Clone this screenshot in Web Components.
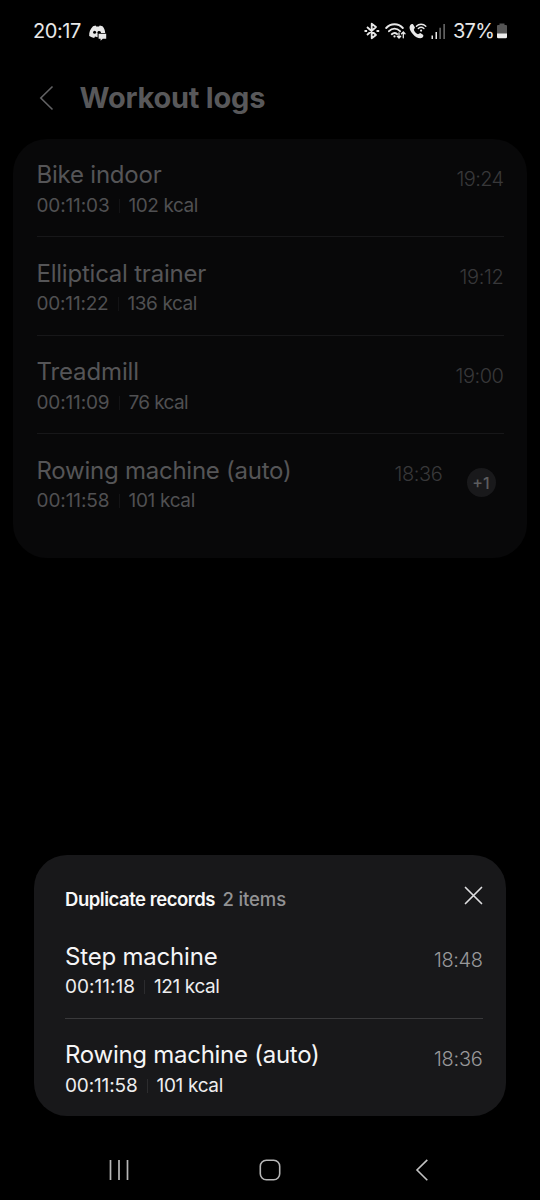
<!DOCTYPE html>
<html lang="en">
<head>
<meta charset="utf-8">
<title>Workout logs</title>
<style>
html,body{margin:0;background:#000}
body{width:540px;height:1200px;overflow:hidden;font-family:Inter,"Liberation Sans",sans-serif}
</style>
</head>
<body>
<workout-screen></workout-screen>
<script>
const define = (name, html, setup) => customElements.define(name, class extends HTMLElement {
  connectedCallback() {
    if (this.shadowRoot) return;
    const t = document.createElement('template');
    t.innerHTML = typeof html === 'function' ? html(k => this.getAttribute(k) ?? '') : html;
    this.attachShadow({ mode: 'open' }).append(t.content.cloneNode(true));
    if (setup) setup(this);
  }
});

// Text whose tracking is tuned so that the line takes the given advance width.
define('fit-text', `<style>:host{display:inline-block;white-space:nowrap}span{display:inline-block}</style><span><slot></slot></span>`, el => {
  const want = parseFloat(el.getAttribute('w'));
  if (!want) return;
  const span = el.shadowRoot.querySelector('span');
  const n = el.textContent.length;
  const have = span.getBoundingClientRect().width;
  span.style.letterSpacing = ((want - have) / n).toFixed(3) + 'px';
});

define('status-bar', `<style>
:host{display:flex;align-items:center;height:62px;box-sizing:border-box;padding:0 32px 0 33px;color:#e8e8e8;font-size:20px;line-height:30px}
.sp{flex:1}svg{display:block;flex:none}
</style>
<fit-text w="48">20:17</fit-text>
<svg style="margin:3px 0 0 8px" width="18" height="16" viewBox="0 0 18 16"><path fill="#e8e8e8" d="M4 1.2 6.6.5 7.3 1.6H10L10.8.5 13.5 1.3C15.3 3.3 16.1 5.8 16.2 8H8.600V12.2L6 11.5 5.2 13 2.8 12.2.2 10.900C0 7.5 1.2 3.8 4 1.2Z"/><circle cx="5.600" cy="7.2" r="1.5" fill="#000"/><path d="M8.300 8C8.300 6.600 9.200 6 10.200 6S12 6.800 12 8" fill="#000"/><path fill="#e8e8e8" d="M9.600 8.800h7.600v5h-3.400l-2.200 2v-2h-2z"/></svg>
<span class="sp"></span>
<svg width="16" height="18" viewBox="0 0 16 18" fill="none" stroke="#e8e8e8" stroke-width="1.800" stroke-linejoin="round"><path d="m3 5 9 8-4.300 3.300V1.700L12 5 3 13"/><path d="M.5 9h2.600M12.500 9h2.700" stroke-width="2.200"/></svg>
<svg style="margin-left:5px" width="22" height="18" viewBox="0 0 22 18" fill="none" stroke="#e8e8e8" stroke-width="1.900" stroke-linecap="round"><path d="M1.200 6C5.700 1 13.300 1 17.800 6M4 9.200C7.300 5.800 11.700 5.800 15 9.200M6.800 12.200C8.500 10.600 10.400 10.600 12 12"/><circle cx="9.500" cy="14.400" r="1.100" fill="#e8e8e8" stroke="none"/><path stroke-width="1.300" d="M14 11v5m-1.700-1.700L14 16l1.700-1.700M18.300 15.800V10m-1.800 1.800 1.800-1.800 1.700 1.800"/></svg>
<svg style="margin-left:2px" width="18" height="18" viewBox="0 0 18 18" fill="none" stroke="#e8e8e8"><path fill="#e8e8e8" stroke="none" d="M1.200 3.200C2 2 3.500 1.600 4.200 2.500L6 5.400 4.800 7.800C5.500 9.800 7 11.300 9 12.300L11.300 11 14 12.800C14.800 13.700 14.200 15 13.200 15.800 10.800 17.200 6.500 15.300 4 12.200 1 9-.4 5.800 1.200 3.200Z"/><path stroke-width="1.400" stroke-linecap="round" d="M7.400 4.200C10 1.600 14.200 1.600 16.800 4.200M9.300 6.500C11 5 13.200 5 14.900 6.500"/><circle cx="12.100" cy="8.600" r="1.100" fill="#e8e8e8" stroke="none"/></svg>
<svg style="margin-left:4px" width="15" height="16" viewBox="0 0 15 16"><path fill="#e8e8e8" d="M.5 12.500h1.500V16H.5zM4.500 9H6v7H4.500z"/><path fill="#606060" d="M8.300 4.800h1.700V16H8.300zM12.300 1H14v15h-1.700z"/></svg>
<fit-text w="41" style="margin-left:7px">37%</fit-text>
<svg style="margin-left:2px" width="12" height="16" viewBox="0 0 12 16"><path fill="#555" d="M3.500.5h5V2H10a1 1 0 0 1 1 1v8H1V3a1 1 0 0 1 1-1h1.500z"/><path fill="#eee" d="M1 10.500h10V14a1.300 1.300 0 0 1-1.300 1.300H2.300A1.300 1.300 0 0 1 1 14z"/></svg>`);

define('page-header', `<style>
:host{display:flex;align-items:center;height:77px;box-sizing:border-box;padding:0 0 6px 39px;color:#58585a}
h1{margin:0 0 0 24.500px;font-size:29px;line-height:36px;font-weight:700;letter-spacing:-.230px}svg{display:block}
</style>
<svg width="16" height="26" viewBox="0 0 16 26" fill="none" stroke="#626264" stroke-width="1.600"><path d="M13.500 1.500 1.800 13l11.700 11.500"/></svg>
<h1><slot></slot></h1>`);

define('workout-row', a => `<style>
:host{display:flex;align-items:flex-start;height:98.500px;box-sizing:border-box;padding-top:21.500px;border-bottom:1px solid var(--line);color:var(--fg)}
:host([last]){border-bottom:0}
.main{flex:1}
.t{font-size:24px;line-height:30px;height:30.500px;font-weight:400}
.s{display:flex;align-items:center;font-size:19px;line-height:30px;color:var(--sub);font-weight:400}
i{width:1px;height:14px;background:var(--sep);margin:0 9px 0 9px}
.time{font-size:20px;line-height:30px;margin-top:3.500px;color:var(--time);font-weight:300}
</style>
<div class="main"><div class="t"><fit-text w="${a('tw') - 1}">${a('name')}</fit-text></div>
<div class="s"><fit-text w="${a('dw') - 1}">${a('duration')}</fit-text><i></i><fit-text w="${a('kw') - 1.5}">${a('energy')}</fit-text></div></div>
<fit-text class="time" w="${a('cw')}">${a('time')}</fit-text><slot></slot>`);

define('count-badge', `<style>:host{display:flex;align-items:center;justify-content:center;width:29px;height:29px;border-radius:50%;background:#19191b;color:#5c5c5e;font-size:16px;font-weight:500;margin:12.500px 8px 0 24px}</style><slot></slot>`);

define('log-card', `<style>
:host{display:block;margin:-.500px 13px 0;height:419px;box-sizing:border-box;padding:0 23.500px 0 23.500px;border-radius:34px;background:#080809;--fg:#555557;--sub:#505052;--time:#38383a;--line:#171719;--sep:#131315}
</style><slot></slot>`);

define('duplicate-sheet', `<style>
:host{display:block;margin:297px 34px 0;height:261px;box-sizing:border-box;padding:0 23.500px 0 31px;border-radius:33px;background:#18181a;--fg:#f5f5f6;--sub:#ededee;--time:#98989a;--line:#39393b;--sep:#2c2c2e}
header{display:flex;align-items:center;height:65.500px;box-sizing:border-box;padding-top:24px;font-size:18.500px;line-height:26px;color:#f8f8f8;font-weight:600}
.n{color:#929294;margin-left:7.500px;font-weight:500}.sp{flex:1}svg{display:block;margin:-7px 0 0}
</style>
<header><fit-text w="150">Duplicate records</fit-text><fit-text class="n" w="63.500">2 items</fit-text><span class="sp"></span>
<svg width="19" height="19" viewBox="0 0 19 19" stroke="#dedee0" stroke-width="1.700" stroke-linecap="round"><path d="m1.500 1.500 16 16m0-16-16 16"/></svg></header>
<slot></slot>`);

define('nav-bar', `<style>
:host{display:flex;align-items:center;height:84px;box-sizing:border-box;padding:24px 0 0 108px}
svg{display:block}
</style>
<svg width="22" height="22" viewBox="0 0 22 22" stroke="#b6b6b6" stroke-width="1.700"><path d="M2.500 1v20M11 1v20M19.500 1v20"/></svg>
<svg style="margin-left:129px" width="22" height="22" viewBox="0 0 22 22" fill="none" stroke="#b6b6b6" stroke-width="1.600"><rect x="1.300" y="1.300" width="19.400" height="19.400" rx="6"/></svg>
<svg style="margin-left:133.500px" width="14" height="22" viewBox="0 0 14 22" fill="none" stroke="#c2c2c2" stroke-width="1.600"><path d="M12.300.900 2 11l10.300 10.200"/></svg>`);

define('workout-screen', `<style>:host{display:flex;flex-direction:column;width:540px;height:1200px;background:#000}</style>
<status-bar></status-bar>
<page-header>Workout logs</page-header>
<log-card>
<workout-row name="Bike indoor" tw="126" duration="00:11:03" dw="74" energy="102 kcal" kw="71" time="19:24" cw="47"></workout-row>
<workout-row name="Elliptical trainer" tw="170.5" duration="00:11:22" dw="73" energy="136 kcal" kw="71" time="19:12" cw="44"></workout-row>
<workout-row name="Treadmill" tw="103.5" duration="00:11:09" dw="74" energy="76 kcal" kw="61" time="19:00" cw="48"></workout-row>
<workout-row last name="Rowing machine (auto)" tw="256" duration="00:11:58" dw="74" energy="101 kcal" kw="68" time="18:36" cw="48"><count-badge>+1</count-badge></workout-row>
</log-card>
<duplicate-sheet>
<workout-row name="Step machine" tw="153.5" duration="00:11:18" dw="71" energy="121 kcal" kw="67" time="18:48" cw="48.5"></workout-row>
<workout-row last name="Rowing machine (auto)" tw="255.5" duration="00:11:58" dw="73.5" energy="101 kcal" kw="68" time="18:36" cw="48.5"></workout-row>
</duplicate-sheet>
<nav-bar></nav-bar>`);
</script>
</body>
</html>
